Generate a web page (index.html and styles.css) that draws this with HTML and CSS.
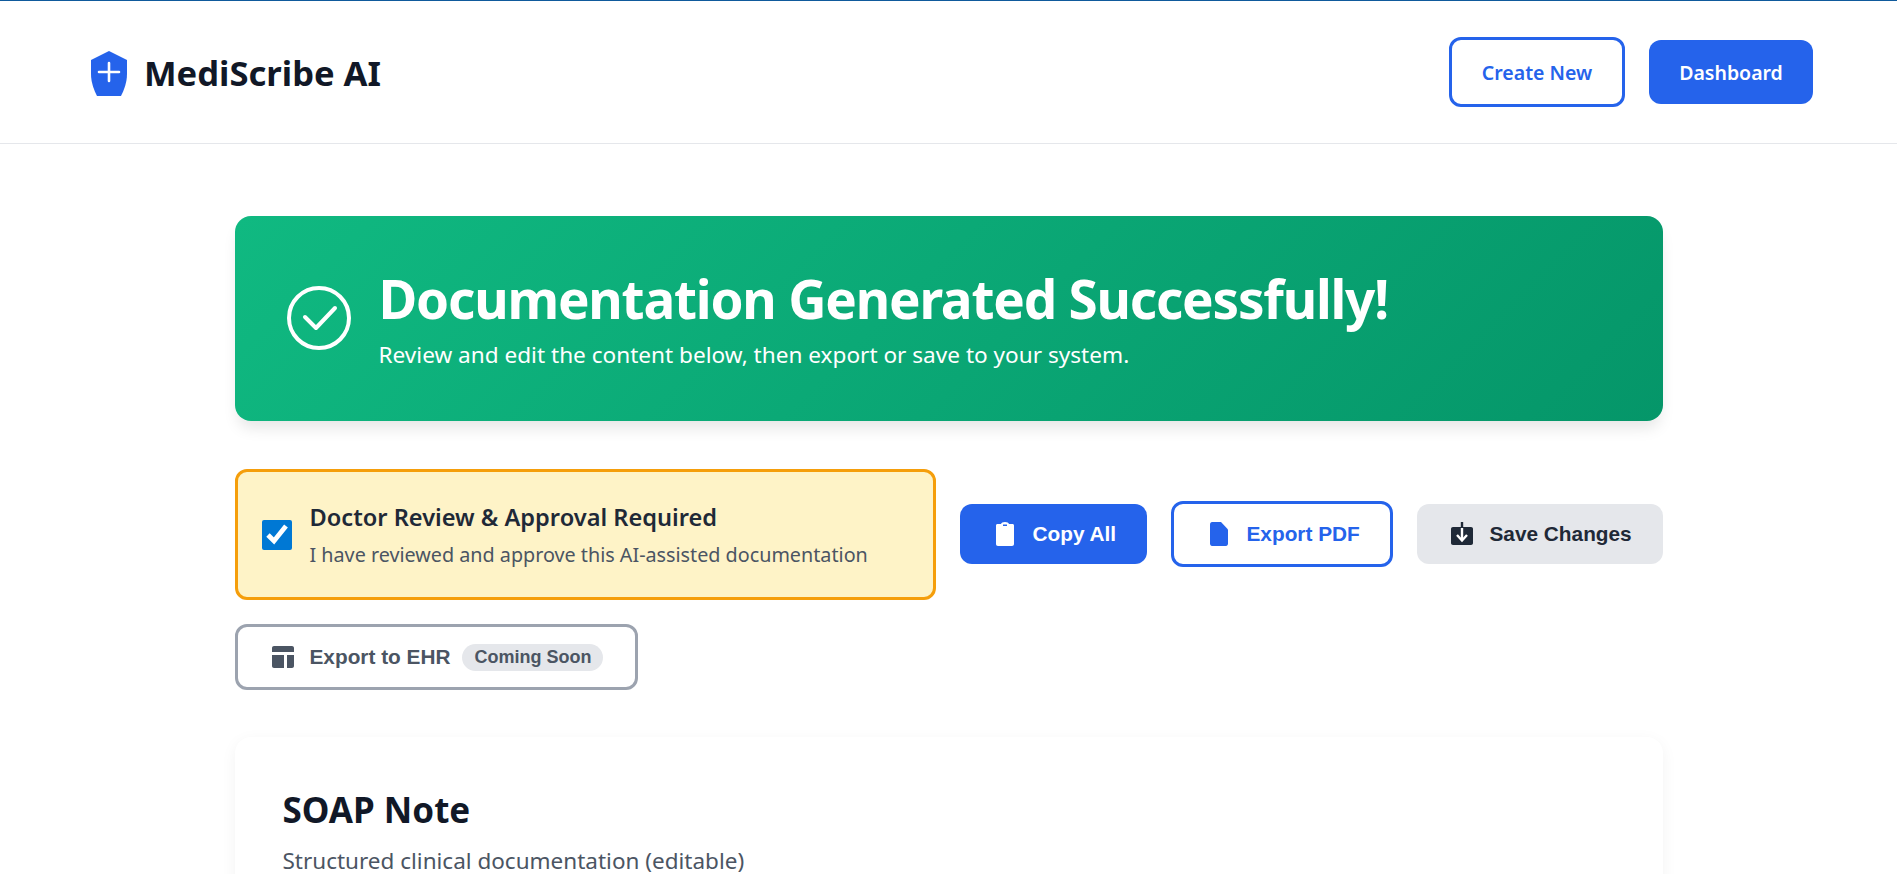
FILE: index.html
```html
<!DOCTYPE html>
<html lang="en">
<head>
    <meta charset="UTF-8">
    <meta name="viewport" content="width=device-width, initial-scale=1.0">
    <title>MediScribe AI - Documentation</title>
    <link rel="stylesheet" href="styles.css">
</head>
<body>

    <header class="topbar">
        <div class="brand">
            <svg class="brand-icon" viewBox="0 0 48 48" width="48" height="48">
                <path d="M25 3 L43 12 V26 C43 36 39 44 36 50 H14 C11 44 7 36 7 26 V12 Z" fill="#2563eb"/>
                <path d="M25 15 V33 M15 24 H35" stroke="#fff" stroke-width="2.6" stroke-linecap="round" fill="none"/>
            </svg>
            <span class="brand-name">MediScribe AI</span>
        </div>
        <nav class="topbar-actions">
            <a class="nav-btn nav-btn-outline">Create New</a>
            <a class="nav-btn nav-btn-solid">Dashboard</a>
        </nav>
    </header>

    <main class="page">
        <section class="hero">
            <svg class="hero-icon" viewBox="0 0 64 64" width="64" height="64">
                <circle cx="32" cy="32" r="30" fill="none" stroke="#fff" stroke-width="4"/>
                <path d="M18 31 L29 42 L48 22" fill="none" stroke="#fff" stroke-width="4" stroke-linecap="round" stroke-linejoin="round"/>
            </svg>
            <div class="hero-text">
                <h1 class="hero-title">Documentation Generated Successfully!</h1>
                <p class="hero-sub">Review and edit the content below, then export or save to your system.</p>
            </div>
        </section>

        <section class="actions">
            <label class="review">
                <input type="checkbox" class="review-check" checked>
                <span>
                    <strong class="review-title">Doctor Review &amp; Approval Required</strong>
                    <span class="review-sub">I have reviewed and approve this AI-assisted documentation</span>
                </span>
            </label>

            <button class="btn btn-primary">
                <svg viewBox="0 0 24 24" width="24" height="24"><path fill="#fff" fill-rule="evenodd" d="M3 3.5 C3 2.7 3.6 2 4.5 2 H8 C8.3 .8 9.8 0 12 0 C14.2 0 15.7 .8 16 2 H19.5 C20.4 2 21 2.7 21 3.5 V22 C21 23.2 20.2 24 19 24 H5 C3.8 24 3 23.2 3 22 Z M10 2.4 H14 V4 H10 Z"/></svg>
                Copy All
            </button>
            <button class="btn btn-outline">
                <svg viewBox="0 0 24 24" width="24" height="24"><path fill="#2563eb" d="M3 2.5 C3 1.1 3.9 0 5 0 H14 L21 7.5 V21.5 C21 22.9 20.1 24 19 24 H5 C3.9 24 3 22.9 3 21.5 Z"/></svg>
                Export PDF
            </button>
            <button class="btn btn-grey">
                <svg viewBox="0 0 24 24" width="24" height="24">
                    <path fill="#1f2937" d="M3 5 H21 C22.2 5 23 5.9 23 7 V21 C23 22.2 22.2 23 21 23 H3 C1.8 23 1 22.2 1 21 V7 C1 5.9 1.8 5 3 5 Z"/>
                    <path fill="none" stroke="#fff" stroke-width="2.4" d="M7 13 L12 18.5 L17 13"/>
                    <path fill="none" stroke="#fff" stroke-width="2.4" d="M12 6 V18"/>
                    <path fill="none" stroke="#1f2937" stroke-width="2.4" d="M12 0 V6"/>
                </svg>
                Save Changes
            </button>

            <button class="btn btn-ehr">
                <svg viewBox="0 0 24 24" width="24" height="24"><path fill="#4b5563" d="M1 3 C1 1.9 1.9 1 3 1 H21 C22 1 23 1.9 23 3 V7 H1 Z M1 10 H13 V23 H3 C1.9 23 1 22.1 1 21 Z M16 10 H23 V21 C23 22.1 22 23 21 23 H16 Z"/></svg>
                Export to EHR
                <span class="badge">Coming Soon</span>
            </button>
        </section>

        <section class="note-card">
            <h2 class="note-title">SOAP Note</h2>
            <p class="note-sub">Structured clinical documentation (editable)</p>
        </section>
    </main>

</body>
</html>
```

FILE: styles.css
```css
* {
    box-sizing: border-box;
}

body {
    margin: 0;
    background-color: #fff;
    font-family: "Noto Sans", "Open Sans", sans-serif;
    color: #111827;
}

.topbar {
    height: 144px;
    padding: 0 84px;
    border-top: 1px solid #0f5a9c;
    border-bottom: 1px solid #e5e7eb;
    display: flex;
    justify-content: space-between;
    align-items: center;
}

.brand {
    display: flex;
    align-items: center;
    gap: 12px;
}

.brand-name {
    font-size: 34.6px;
    font-weight: 700;
    color: #111827;
}

.topbar-actions {
    display: flex;
    align-items: center;
    gap: 24px;
}

.nav-btn {
    display: flex;
    align-items: center;
    justify-content: center;
    border-radius: 12px;
    font-size: 19.5px;
    font-weight: 600;
}

.nav-btn-outline {
    width: 176px;
    height: 70px;
    border: 3px solid #2563eb;
    color: #2563eb;
}

.nav-btn-solid {
    width: 164px;
    height: 64px;
    background-color: #2563eb;
    color: #fff;
}

.page {
    width: 1428px;
    margin: 72px auto 0;
}

.hero {
    height: 205px;
    padding: 0 52px;
    border-radius: 16px;
    background: linear-gradient(135deg, #10b981, #059669);
    box-shadow: 0 10px 15px -3px rgba(0, 0, 0, 0.1);
    color: #fff;
    display: flex;
    align-items: center;
    gap: 28px;
}

.hero-icon {
    margin-bottom: 1px;
}

.hero-text {
    padding-bottom: 1px;
}

.hero-title {
    margin: 0;
    font-size: 53px;
    font-weight: 700;
    line-height: 68px;
    letter-spacing: -1.2px;
}

.hero-sub {
    margin: 6px 0 0;
    font-size: 22.6px;
    line-height: 32px;
}

.actions {
    margin-top: 48px;
    display: flex;
    flex-wrap: wrap;
    align-items: center;
    gap: 24px;
}

.review {
    width: 701px;
    height: 131px;
    padding: 0 24px;
    border: 3px solid #f59e0b;
    border-radius: 12px;
    background-color: #fef3c7;
    display: flex;
    align-items: center;
    gap: 18px;
}

.review-check {
    width: 30px;
    height: 30px;
    margin: 0;
    accent-color: #0078d4;
}

.review-title {
    display: block;
    font-size: 23.6px;
    font-weight: 600;
    color: #1f2937;
}

.review-sub {
    display: block;
    margin-top: 8px;
    font-size: 19.75px;
    color: #4b5563;
}

.btn {
    height: 60px;
    margin-bottom: 1px;
    padding: 0 33px;
    border: none;
    border-radius: 12px;
    display: flex;
    align-items: center;
    gap: 16px;
    font-family: "Liberation Sans", Arial, sans-serif;
    font-size: 20.8px;
    font-weight: 700;
    white-space: nowrap;
}

.btn svg {
    flex-shrink: 0;
}

.btn-primary {
    width: 187px;
    background-color: #2563eb;
    color: #fff;
}

.btn-outline {
    width: 222px;
    height: 66px;
    border: 3px solid #2563eb;
    background-color: #fff;
    color: #2563eb;
}

.btn-grey {
    width: 246px;
    background-color: #e5e7eb;
    color: #1f2937;
}

.btn-ehr {
    width: 403px;
    height: 66px;
    margin-bottom: 0;
    gap: 15px;
    border: 3px solid #9ca3af;
    background-color: #fff;
    color: #4b5563;
}

.badge {
    margin-left: -3px;
    padding: 3px 12px;
    border-radius: 14px;
    background-color: #e5e7eb;
    font-size: 18px;
}

.note-card {
    margin-top: 47px;
    padding: 49px 48px;
    height: 400px;
    border-radius: 16px;
    background-color: #fff;
    box-shadow: 0 4px 16px rgba(0, 0, 0, 0.05);
}

.note-title {
    margin: 0;
    font-size: 35px;
    font-weight: 700;
    color: #111827;
}

.note-sub {
    margin: 12px 0 0;
    font-size: 22.5px;
    color: #4b5563;
}
```
